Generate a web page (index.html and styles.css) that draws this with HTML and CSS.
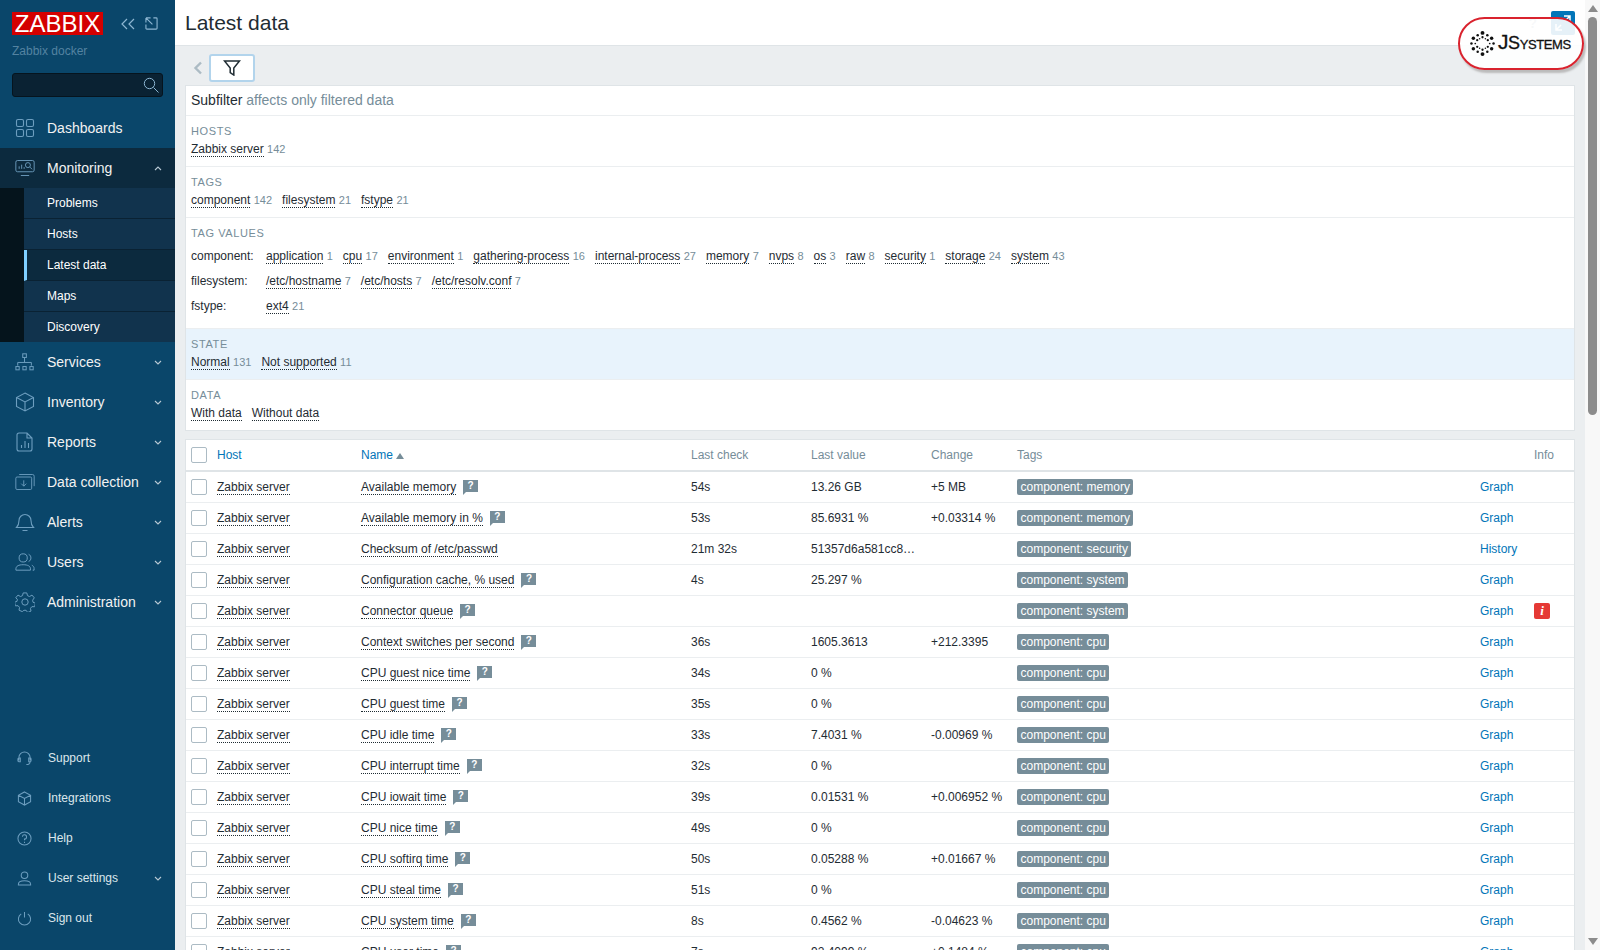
FILE: index.html
```html
<!DOCTYPE html>
<html lang="en">
<head>
    <meta charset="UTF-8">
    <title>Latest data</title>
    <link rel="stylesheet" href="styles.css">
</head>
<body>
    <!-- Sidebar -->
    <aside class="sidebar">
        <div class="brand">
            <div class="brand-top">
                <div class="logo">ZABBIX</div>
                <div class="brand-tools">
                    <svg width="16" height="14" viewBox="0 0 16 14"><path d="M7 2 2 7l5 5M14 2 9 7l5 5"/></svg>
                    <svg width="13" height="13" viewBox="0 0 14 14"><path d="M9 1h3a1 1 0 0 1 1 1v10a1 1 0 0 1-1 1H2a1 1 0 0 1-1-1V8M1 1l7 7M1 1v5M1 1h5"/></svg>
                </div>
            </div>
            <div class="server-name">Zabbix docker</div>
            <div class="search">
                <svg width="16" height="16" viewBox="0 0 16 16"><circle cx="6.5" cy="6.5" r="5.2"/><path d="m10.5 10.5 5 5"/></svg>
            </div>
        </div>

        <nav class="menu">
            <a class="menu-item">
                <svg class="menu-icon" viewBox="0 0 20 20"><rect x="1.5" y="1.5" width="7" height="7" rx="1.5"/><rect x="11.5" y="1.5" width="7" height="7" rx="1.5"/><rect x="1.5" y="11.5" width="7" height="7" rx="1.5"/><rect x="11.5" y="11.5" width="7" height="7" rx="1.5"/></svg>
                Dashboards
            </a>
            <a class="menu-item menu-open">
                <svg class="menu-icon" viewBox="0 0 24 20"><rect x="1" y="1" width="22" height="13.5" rx="2"/><path d="M7 19h10M5 11V8M8 11V6M11 11V9"/><circle cx="15.5" cy="6.5" r="3"/><path d="m18 9 2.5 2.5"/></svg>
                Monitoring
                <svg class="chevron" viewBox="0 0 8 5"><path d="M1 4 4 1l3 3"/></svg>
            </a>
            <div class="submenu">
                <div class="submenu-list">
                    <a class="sub-item">Problems</a>
                    <a class="sub-item">Hosts</a>
                    <a class="sub-item sub-active">Latest data</a>
                    <a class="sub-item">Maps</a>
                    <a class="sub-item">Discovery</a>
                </div>
            </div>
            <a class="menu-item">
                <svg class="menu-icon" viewBox="0 0 22 20"><rect x="8.5" y="1" width="4" height="4"/><path d="M10.5 5v5M3 14v-3.5h15V14"/><rect x="1" y="15" width="3.6" height="3.6"/><rect x="8.7" y="15" width="3.6" height="3.6"/><rect x="16.4" y="15" width="3.6" height="3.6"/></svg>
                Services
                <svg class="chevron" viewBox="0 0 8 5"><path d="m1 1 3 3 3-3"/></svg>
            </a>
            <a class="menu-item">
                <svg class="menu-icon" viewBox="0 0 20 20"><path d="M10 1 18.5 5.5v9L10 19l-8.5-4.500v-9zM1.5 5.5 10 10l8.5-4.500M10 10v9"/></svg>
                Inventory
                <svg class="chevron" viewBox="0 0 8 5"><path d="m1 1 3 3 3-3"/></svg>
            </a>
            <a class="menu-item">
                <svg class="menu-icon" viewBox="0 0 20 20"><path d="M4 1h8l5 5v11a2 2 0 0 1-2 2H4a2 2 0 0 1-2-2V3a2 2 0 0 1 2-2zM12 1v5h5M6.5 16v-3M10 16V9M13.5 16v-5"/></svg>
                Reports
                <svg class="chevron" viewBox="0 0 8 5"><path d="m1 1 3 3 3-3"/></svg>
            </a>
            <a class="menu-item">
                <svg class="menu-icon" viewBox="0 0 24 20"><rect x="1" y="4" width="19" height="15" rx="1.5"/><path d="M5 1h16a2 2 0 0 1 2 2v12M10.5 8v7M7.5 12l3 3 3-3"/></svg>
                Data collection
                <svg class="chevron" viewBox="0 0 8 5"><path d="m1 1 3 3 3-3"/></svg>
            </a>
            <a class="menu-item">
                <svg class="menu-icon" viewBox="0 0 20 20"><path d="M1.5 15.5c2-2 2.5-3 2.5-7a6 6 0 0 1 12 0c0 4 .5 5 2.5 7zM7.5 18.5h5"/></svg>
                Alerts
                <svg class="chevron" viewBox="0 0 8 5"><path d="m1 1 3 3 3-3"/></svg>
            </a>
            <a class="menu-item">
                <svg class="menu-icon" viewBox="0 0 22 20"><circle cx="9" cy="5.5" r="4.5"/><path d="M1 19v-1.500c0-3 3-4.500 8-4.500s8 1.500 8 4.500V19zM15 1.5c2 1 2.5 2.5 2.5 4s-.5 3-2.500 4M18.5 13.500c1.500.8 2.500 2 2.500 3.500v2h-1.500"/></svg>
                Users
                <svg class="chevron" viewBox="0 0 8 5"><path d="m1 1 3 3 3-3"/></svg>
            </a>
            <a class="menu-item">
                <svg class="menu-icon" viewBox="0 0 22 22"><circle cx="11" cy="11" r="3.5"/><path d="M9 1h4l.7 3 2.300 1 2.700-1.600 2.500 3-1.800 2.600.4 2.300 2.700 1-.9 3.900-3-.1-1.600 1.900.6 3-3.600 1.600-1.800-2.500h-2.400L8 21.600l-3.600-1.600.6-3-1.600-1.900-3 .1-.9-3.900 2.700-1 .4-2.300L.8 6.400l2.500-3L6 5l2.300-1z"/></svg>
                Administration
                <svg class="chevron" viewBox="0 0 8 5"><path d="m1 1 3 3 3-3"/></svg>
            </a>
        </nav>

        <nav class="menu-bottom">
            <a class="bottom-item">
                <svg class="bottom-icon" viewBox="0 0 16 16"><path d="M2 10V7a6 6 0 0 1 12 0v3M2 7.5h1.5v4H2a1 1 0 0 1-1-1v-2a1 1 0 0 1 1-1zM14 7.5h-1.5v4H14a1 1 0 0 0 1-1v-2a1 1 0 0 0-1-1zM14 11.5c0 2-1.500 3-4 3"/></svg>
                Support
            </a>
            <a class="bottom-item">
                <svg class="bottom-icon" viewBox="0 0 16 16"><path d="M8 1l6.500 3.500v7L8 15l-6.500-3.500v-7zM1.500 4.500 8 8l6.500-3.500M8 8v7"/></svg>
                Integrations
            </a>
            <a class="bottom-item">
                <svg class="bottom-icon" viewBox="0 0 16 16"><circle cx="8" cy="8" r="7"/><path d="M5.8 6.2A2.200 2.200 0 1 1 8 8.500v1.300M8 11.500v1.200"/></svg>
                Help
            </a>
            <a class="bottom-item">
                <svg class="bottom-icon" viewBox="0 0 16 16"><circle cx="8" cy="4.5" r="3.5"/><path d="M1.5 15v-1c0-2.500 2.500-3.500 6.500-3.500s6.500 1 6.500 3.500v1z"/></svg>
                User settings
                <svg class="chevron" viewBox="0 0 8 5"><path d="m1 1 3 3 3-3"/></svg>
            </a>
            <a class="bottom-item">
                <svg class="bottom-icon" viewBox="0 0 16 16"><path d="M8 1v6M4.5 3a6.500 6.500 0 1 0 7 0"/></svg>
                Sign out
            </a>
        </nav>
    </aside>

    <main class="main">
        <header class="page-header">
            <h1>Latest data</h1>
            <div class="header-tools">
                <span class="header-help">?</span>
                <span class="kiosk-btn">
                    <svg width="18" height="18" viewBox="0 0 18 18"><path d="M10 2h6v6M16 2l-5 5M8 16H2v-6M2 16l5-5"/></svg>
                </span>
            </div>
        </header>

        <div class="filter-bar">
            <svg class="filter-back" width="10" height="14" viewBox="0 0 10 14"><path d="M8 1.5 2.500 7 8 12.500"/></svg>
            <button class="filter-btn">
                <svg width="18" height="16" viewBox="0 0 18 16"><path d="M1.5 1h15L10.800 8v7L7.200 12.500V8z"/></svg>
            </button>
        </div>

        <!-- Subfilter -->
        <section class="subfilter">
            <div class="sf-title">Subfilter <span class="muted">affects only filtered data</span></div>
            <div class="sf-group">
                <div class="sf-label">Hosts</div>
                <div class="sf-values">
                    <span><a class="dot-link">Zabbix server</a> <span class="count">142</span></span>
                </div>
            </div>
            <div class="sf-group">
                <div class="sf-label">Tags</div>
                <div class="sf-values">
                    <span><a class="dot-link">component</a> <span class="count">142</span></span>
                    <span><a class="dot-link">filesystem</a> <span class="count">21</span></span>
                    <span><a class="dot-link">fstype</a> <span class="count">21</span></span>
                </div>
            </div>
            <div class="sf-group sf-tagvalues">
                <div class="sf-label">Tag values</div>
                <div class="tv-row">
                    <div class="tv-name">component:</div>
                    <div class="sf-values">
                        <span><a class="dot-link">application</a> <span class="count">1</span></span>
                        <span><a class="dot-link">cpu</a> <span class="count">17</span></span>
                        <span><a class="dot-link">environment</a> <span class="count">1</span></span>
                        <span><a class="dot-link">gathering-process</a> <span class="count">16</span></span>
                        <span><a class="dot-link">internal-process</a> <span class="count">27</span></span>
                        <span><a class="dot-link">memory</a> <span class="count">7</span></span>
                        <span><a class="dot-link">nvps</a> <span class="count">8</span></span>
                        <span><a class="dot-link">os</a> <span class="count">3</span></span>
                        <span><a class="dot-link">raw</a> <span class="count">8</span></span>
                        <span><a class="dot-link">security</a> <span class="count">1</span></span>
                        <span><a class="dot-link">storage</a> <span class="count">24</span></span>
                        <span><a class="dot-link">system</a> <span class="count">43</span></span>
                    </div>
                </div>
                <div class="tv-row">
                    <div class="tv-name">filesystem:</div>
                    <div class="sf-values">
                        <span><a class="dot-link">/etc/hostname</a> <span class="count">7</span></span>
                        <span><a class="dot-link">/etc/hosts</a> <span class="count">7</span></span>
                        <span><a class="dot-link">/etc/resolv.conf</a> <span class="count">7</span></span>
                    </div>
                </div>
                <div class="tv-row">
                    <div class="tv-name">fstype:</div>
                    <div class="sf-values">
                        <span><a class="dot-link">ext4</a> <span class="count">21</span></span>
                    </div>
                </div>
            </div>
            <div class="sf-group sf-selected">
                <div class="sf-label">State</div>
                <div class="sf-values">
                    <span><a class="dot-link">Normal</a> <span class="count">131</span></span>
                    <span><a class="dot-link">Not supported</a> <span class="count">11</span></span>
                </div>
            </div>
            <div class="sf-group sf-last">
                <div class="sf-label">Data</div>
                <div class="sf-values">
                    <span><a class="dot-link">With data</a></span>
                    <span><a class="dot-link">Without data</a></span>
                </div>
            </div>
        </section>

        <!-- Items table -->
        <div class="table-wrap">
            <table class="data-table">
                <colgroup>
                    <col class="c-check"><col class="c-host"><col class="c-name"><col class="c-lastcheck"><col class="c-lastvalue"><col class="c-change"><col class="c-tags"><col class="c-graph"><col class="c-info">
                </colgroup>
                <thead>
                    <tr>
                        <th><span class="checkbox"></span></th>
                        <th class="sortable">Host</th>
                        <th class="sortable">Name <span class="sort-arrow"></span></th>
                        <th>Last check</th>
                        <th>Last value</th>
                        <th>Change</th>
                        <th>Tags</th>
                        <th></th>
                        <th>Info</th>
                    </tr>
                </thead>
                <tbody>
                    <tr><td><span class="checkbox"></span></td><td><a class="dot-link">Zabbix server</a></td><td><a class="dot-link">Available memory</a><span class="help-tip">?</span></td><td>54s</td><td>13.26 GB</td><td>+5 MB</td><td><span class="tag">component: memory</span></td><td><a class="graph-link">Graph</a></td><td></td></tr>
                    <tr><td><span class="checkbox"></span></td><td><a class="dot-link">Zabbix server</a></td><td><a class="dot-link">Available memory in %</a><span class="help-tip">?</span></td><td>53s</td><td>85.6931 %</td><td>+0.03314 %</td><td><span class="tag">component: memory</span></td><td><a class="graph-link">Graph</a></td><td></td></tr>
                    <tr><td><span class="checkbox"></span></td><td><a class="dot-link">Zabbix server</a></td><td><a class="dot-link">Checksum of /etc/passwd</a></td><td>21m 32s</td><td>51357d6a581cc8e40b7d19f3a2c6e05d</td><td></td><td><span class="tag">component: security</span></td><td><a class="graph-link">History</a></td><td></td></tr>
                    <tr><td><span class="checkbox"></span></td><td><a class="dot-link">Zabbix server</a></td><td><a class="dot-link">Configuration cache, % used</a><span class="help-tip">?</span></td><td>4s</td><td>25.297 %</td><td></td><td><span class="tag">component: system</span></td><td><a class="graph-link">Graph</a></td><td></td></tr>
                    <tr><td><span class="checkbox"></span></td><td><a class="dot-link">Zabbix server</a></td><td><a class="dot-link">Connector queue</a><span class="help-tip">?</span></td><td></td><td></td><td></td><td><span class="tag">component: system</span></td><td><a class="graph-link">Graph</a></td><td><span class="info-badge">i</span></td></tr>
                    <tr><td><span class="checkbox"></span></td><td><a class="dot-link">Zabbix server</a></td><td><a class="dot-link">Context switches per second</a><span class="help-tip">?</span></td><td>36s</td><td>1605.3613</td><td>+212.3395</td><td><span class="tag">component: cpu</span></td><td><a class="graph-link">Graph</a></td><td></td></tr>
                    <tr><td><span class="checkbox"></span></td><td><a class="dot-link">Zabbix server</a></td><td><a class="dot-link">CPU guest nice time</a><span class="help-tip">?</span></td><td>34s</td><td>0 %</td><td></td><td><span class="tag">component: cpu</span></td><td><a class="graph-link">Graph</a></td><td></td></tr>
                    <tr><td><span class="checkbox"></span></td><td><a class="dot-link">Zabbix server</a></td><td><a class="dot-link">CPU guest time</a><span class="help-tip">?</span></td><td>35s</td><td>0 %</td><td></td><td><span class="tag">component: cpu</span></td><td><a class="graph-link">Graph</a></td><td></td></tr>
                    <tr><td><span class="checkbox"></span></td><td><a class="dot-link">Zabbix server</a></td><td><a class="dot-link">CPU idle time</a><span class="help-tip">?</span></td><td>33s</td><td>7.4031 %</td><td>-0.00969 %</td><td><span class="tag">component: cpu</span></td><td><a class="graph-link">Graph</a></td><td></td></tr>
                    <tr><td><span class="checkbox"></span></td><td><a class="dot-link">Zabbix server</a></td><td><a class="dot-link">CPU interrupt time</a><span class="help-tip">?</span></td><td>32s</td><td>0 %</td><td></td><td><span class="tag">component: cpu</span></td><td><a class="graph-link">Graph</a></td><td></td></tr>
                    <tr><td><span class="checkbox"></span></td><td><a class="dot-link">Zabbix server</a></td><td><a class="dot-link">CPU iowait time</a><span class="help-tip">?</span></td><td>39s</td><td>0.01531 %</td><td>+0.006952 %</td><td><span class="tag">component: cpu</span></td><td><a class="graph-link">Graph</a></td><td></td></tr>
                    <tr><td><span class="checkbox"></span></td><td><a class="dot-link">Zabbix server</a></td><td><a class="dot-link">CPU nice time</a><span class="help-tip">?</span></td><td>49s</td><td>0 %</td><td></td><td><span class="tag">component: cpu</span></td><td><a class="graph-link">Graph</a></td><td></td></tr>
                    <tr><td><span class="checkbox"></span></td><td><a class="dot-link">Zabbix server</a></td><td><a class="dot-link">CPU softirq time</a><span class="help-tip">?</span></td><td>50s</td><td>0.05288 %</td><td>+0.01667 %</td><td><span class="tag">component: cpu</span></td><td><a class="graph-link">Graph</a></td><td></td></tr>
                    <tr><td><span class="checkbox"></span></td><td><a class="dot-link">Zabbix server</a></td><td><a class="dot-link">CPU steal time</a><span class="help-tip">?</span></td><td>51s</td><td>0 %</td><td></td><td><span class="tag">component: cpu</span></td><td><a class="graph-link">Graph</a></td><td></td></tr>
                    <tr><td><span class="checkbox"></span></td><td><a class="dot-link">Zabbix server</a></td><td><a class="dot-link">CPU system time</a><span class="help-tip">?</span></td><td>8s</td><td>0.4562 %</td><td>-0.04623 %</td><td><span class="tag">component: cpu</span></td><td><a class="graph-link">Graph</a></td><td></td></tr>
                    <tr><td><span class="checkbox"></span></td><td><a class="dot-link">Zabbix server</a></td><td><a class="dot-link">CPU user time</a><span class="help-tip">?</span></td><td>7s</td><td>92.4099 %</td><td>+0.1484 %</td><td><span class="tag">component: cpu</span></td><td><a class="graph-link">Graph</a></td><td></td></tr>
                </tbody>
            </table>
        </div>
    </main>

    <!-- Window scrollbar -->
    <div class="scrollbar">
        <span class="scroll-up"></span>
        <span class="scroll-thumb"></span>
        <span class="scroll-down"></span>
    </div>

    <!-- Overlay logo on top of the page -->
    <div class="js-badge">
        <svg width="25" height="25" viewBox="0 0 26 26">
            <circle cx="13" cy="2" r="2"/><circle cx="13" cy="24" r="2"/><circle cx="3.5" cy="7.5" r="1.8"/><circle cx="22.5" cy="7.5" r="1.8"/><circle cx="3.5" cy="18.5" r="1.8"/><circle cx="22.5" cy="18.5" r="1.8"/>
            <circle cx="8" cy="4.5" r="1.3"/><circle cx="18" cy="4.5" r="1.3"/><circle cx="8" cy="21.5" r="1.3"/><circle cx="18" cy="21.5" r="1.3"/><circle cx="1.5" cy="13" r="1.3"/><circle cx="24.5" cy="13" r="1.3"/>
            <circle cx="13" cy="6.5" r="1.2"/><circle cx="13" cy="19.5" r="1.2"/><circle cx="7.5" cy="9.5" r="1.2"/><circle cx="18.5" cy="9.5" r="1.2"/><circle cx="7.5" cy="16.5" r="1.2"/><circle cx="18.5" cy="16.5" r="1.2"/>
            <circle cx="5.5" cy="13" r=".9"/><circle cx="20.5" cy="13" r=".9"/><circle cx="10" cy="8" r=".8"/><circle cx="16" cy="8" r=".8"/><circle cx="10" cy="18" r=".8"/><circle cx="16" cy="18" r=".8"/>
        </svg>
        <span class="js-name"><span class="js-j">J</span>Systems</span>
    </div>
</body>
</html>
```

FILE: styles.css
```css
html, body {
    height: 100%;
}

body {
    position: relative;
    display: flex;
    height: 950px;
    margin: 0;
    overflow: hidden;
    background-color: #ebeef0;
    color: #1f2c33;
    font-family: 'Liberation Sans', Arial, sans-serif;
    font-size: 12px;
}

svg {
    fill: none;
    stroke: currentColor;
    flex-shrink: 0;
}

/* Sidebar */
.sidebar {
    display: flex;
    flex-direction: column;
    flex-shrink: 0;
    width: 175px;
    height: 950px;
    background-color: #0a466a;
    color: #f2f2f2;
}

.brand {
    height: 108px;
    box-sizing: border-box;
    padding: 12px 12px 0;
}

.brand-top {
    display: flex;
    align-items: center;
}

.logo {
    width: 91px;
    height: 23px;
    background-color: #d40000;
    color: #fff;
    font-size: 24px;
    line-height: 24px;
    text-align: center;
}

.brand-tools {
    display: flex;
    align-items: center;
    gap: 9px;
    margin-left: 17px;
    color: #8db6d2;
    stroke-width: 1.2;
}

.server-name {
    margin-top: 9px;
    color: #5483a1;
    line-height: 14px;
}

.search {
    display: flex;
    align-items: center;
    justify-content: flex-end;
    box-sizing: border-box;
    width: 151px;
    height: 24px;
    margin-top: 15px;
    padding-right: 3px;
    background-color: #0a2233;
    border: 1px solid #06141e;
    border-radius: 3px;
    color: #8db6d2;
}

.menu-item {
    display: flex;
    align-items: center;
    height: 40px;
    box-sizing: border-box;
    padding-left: 15px;
    font-size: 14px;
}

.menu-open {
    background-color: #0c2a3e;
}

.menu-icon {
    width: 20px;
    height: 20px;
    margin-right: 12px;
    color: #6d9ebf;
    stroke-width: 1.1;
}

.chevron {
    width: 8px;
    height: 5px;
    margin-left: auto;
    margin-right: 13px;
    color: #b8c9d4;
    stroke-width: 1.1;
}

.submenu {
    background-color: #05141c;
    padding-left: 24px;
}

.submenu-list {
    background-color: #11334d;
}

.sub-item {
    display: flex;
    align-items: center;
    height: 31px;
    box-sizing: border-box;
    padding-left: 23px;
    border-bottom: 1px solid #0a2233;
    color: #fff;
}

.sub-item:last-child {
    height: 30px;
    border-bottom: none;
}

.sub-active {
    padding-left: 20px;
    background-color: #0c2a3e;
    border-left: 3px solid #7fcfff;
}

.menu-bottom {
    margin-top: auto;
    padding-bottom: 12px;
}

.bottom-item {
    display: flex;
    align-items: center;
    height: 40px;
    padding-left: 17px;
    color: #dce6ec;
}

.bottom-icon {
    width: 15px;
    height: 15px;
    margin-right: 16px;
    color: #6d9ebf;
    stroke-width: 1.1;
}

/* Main area */
.main {
    flex: 1;
    min-width: 0;
    height: 950px;
    overflow: hidden;
}

.page-header {
    display: flex;
    align-items: center;
    justify-content: space-between;
    height: 45px;
    padding: 0 10px;
    background-color: #fff;
    border-bottom: 1px solid #dfe4e7;
}

.page-header h1 {
    margin: 0;
    font-size: 21px;
    font-weight: normal;
}

.header-tools {
    display: flex;
    align-items: center;
    gap: 14px;
}

.header-help {
    color: #acbbc4;
    font-size: 14px;
    font-weight: bold;
}

.kiosk-btn {
    display: flex;
    align-items: center;
    justify-content: center;
    width: 24px;
    height: 24px;
    background-color: #0275b8;
    border-radius: 2px;
    color: #fff;
    stroke-width: 1.5;
}

.filter-bar {
    display: flex;
    align-items: center;
    box-sizing: border-box;
    height: 39px;
    padding: 5px 0 0 18px;
}

.filter-back {
    color: #acbbc4;
    stroke-width: 2.4;
}

.filter-btn {
    display: flex;
    align-items: center;
    justify-content: center;
    width: 46px;
    height: 28px;
    margin-left: 6px;
    padding: 0;
    background-color: #fff;
    border: 2px solid #b2d4ec;
    border-radius: 3px;
    color: #1f2c33;
    stroke-width: 1.5;
}

/* Subfilter */
.subfilter {
    margin: 0 10px;
    background-color: #fff;
    border: 1px solid #dfe4e7;
}

.sf-title {
    height: 29px;
    padding-left: 5px;
    border-bottom: 1px solid #ebeef0;
    font-size: 14px;
    line-height: 29px;
}

.muted {
    color: #768d99;
}

.sf-group {
    padding: 7px 5px 8px;
    border-bottom: 1px solid #ebeef0;
}

.sf-label {
    color: #768d99;
    font-size: 11px;
    line-height: 16px;
    letter-spacing: .6px;
    text-transform: uppercase;
}

.sf-values {
    display: flex;
    gap: 10px;
    line-height: 18px;
}

.sf-label + .sf-values {
    margin-top: 1px;
}

.sf-tagvalues {
    padding-bottom: 10px;
}

.sf-tagvalues .sf-label {
    margin-bottom: 2px;
}

.tv-row {
    display: flex;
    align-items: center;
    height: 25px;
}

.tv-name {
    width: 75px;
}

.sf-selected {
    background-color: #e8f3fc;
}

.sf-last {
    border-bottom: none;
}

.dot-link {
    border-bottom: 1px dotted #1f2c33;
    color: #1f2c33;
}

.count {
    color: #768d99;
    font-size: 11px;
}

/* Table */
.table-wrap {
    margin: 8px 10px 0;
    background-color: #fff;
    border: 1px solid #dfe4e7;
    border-bottom: none;
}

.data-table {
    width: 100%;
    table-layout: fixed;
    border-collapse: separate;
    border-spacing: 0;
}

.c-check { width: 26px; }
.c-host { width: 144px; }
.c-name { width: 330px; }
.c-lastcheck { width: 120px; }
.c-lastvalue { width: 120px; }
.c-change { width: 86px; }
.c-tags { width: 463px; }
.c-graph { width: 54px; }
.c-info { width: 45px; }

.data-table th {
    height: 32px;
    box-sizing: border-box;
    padding: 0 5px;
    border-bottom: 2px solid #dfe4e7;
    color: #768d99;
    font-weight: normal;
    text-align: left;
}

.data-table th.sortable {
    color: #0275b8;
}

.data-table td {
    height: 31px;
    box-sizing: border-box;
    padding: 0 5px;
    border-bottom: 1px solid #ebeef0;
    overflow: hidden;
    white-space: nowrap;
    text-overflow: ellipsis;
}

.checkbox {
    display: block;
    box-sizing: border-box;
    width: 16px;
    height: 16px;
    background-color: #fff;
    border: 1px solid #acbbc4;
    border-radius: 2px;
}

.sort-arrow {
    display: inline-block;
    border-left: 4px solid transparent;
    border-right: 4px solid transparent;
    border-bottom: 6px solid #768d99;
}

.help-tip {
    position: relative;
    display: inline-block;
    width: 15px;
    height: 12px;
    margin-left: 7px;
    background-color: #768d99;
    color: #fff;
    font-size: 10px;
    font-weight: bold;
    line-height: 12px;
    text-align: center;
    vertical-align: 2px;
}

.help-tip::after {
    content: "";
    position: absolute;
    left: 0;
    top: 12px;
    border-top: 3px solid #768d99;
    border-right: 3px solid transparent;
}

.tag {
    display: inline-block;
    height: 16px;
    padding: 0 3.5px;
    background-color: #768d99;
    border-radius: 2px;
    color: #fff;
    line-height: 16px;
    vertical-align: middle;
}

.graph-link {
    color: #0275b8;
}

.info-badge {
    display: block;
    width: 16px;
    height: 16px;
    background-color: #e53935;
    border-radius: 2px;
    color: #fff;
    font-family: 'Liberation Serif', serif;
    font-size: 13px;
    font-style: italic;
    font-weight: bold;
    line-height: 16px;
    text-align: center;
}

/* Scrollbar */
.scrollbar {
    display: flex;
    flex-direction: column;
    align-items: center;
    flex-shrink: 0;
    width: 15px;
    height: 950px;
    background-color: #f8f8f8;
}

.scroll-up {
    margin-top: 5px;
    border-left: 5px solid transparent;
    border-right: 5px solid transparent;
    border-bottom: 7px solid #8c8c8c;
}

.scroll-thumb {
    width: 9px;
    height: 398px;
    margin-top: 5px;
    background-color: #8c8c8c;
    border-radius: 5px;
}

.scroll-down {
    margin-top: auto;
    margin-bottom: 5px;
    border-left: 5px solid transparent;
    border-right: 5px solid transparent;
    border-top: 7px solid #8c8c8c;
}

/* Overlay logo */
.js-badge {
    position: absolute;
    left: 1458px;
    top: 17px;
    display: flex;
    align-items: center;
    box-sizing: border-box;
    width: 126px;
    height: 53px;
    padding-left: 10px;
    background-color: rgba(255, 255, 255, .9);
    border: 2px solid #d9232e;
    border-radius: 27px;
    box-shadow: 2px 3px 2px #bbb;
    color: #111;
}

.js-badge svg {
    fill: #111;
    stroke: none;
}

.js-name {
    margin: 0 0 3px 3px;
    font-size: 18px;
    font-variant: small-caps;
    letter-spacing: -.4px;
    white-space: nowrap;
    -webkit-text-stroke: .3px #111;
}

.js-j {
    font-size: 21px;
}
```
